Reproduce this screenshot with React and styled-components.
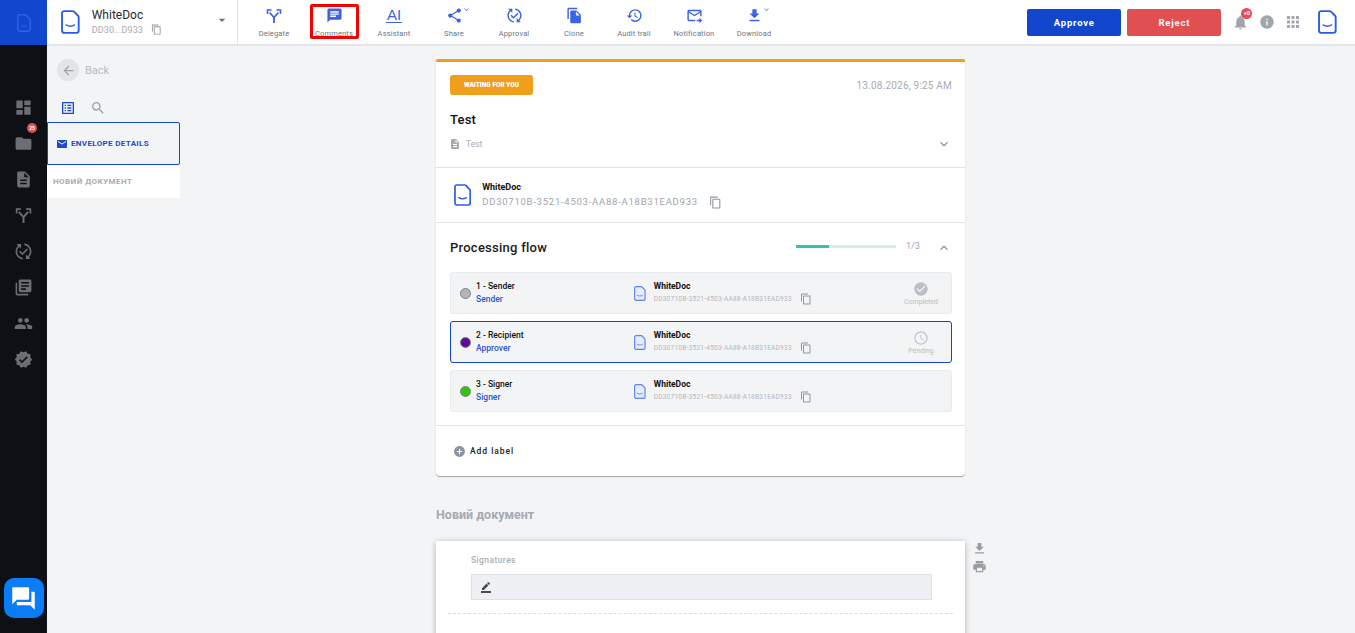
import React from "react";
import styled, { createGlobalStyle } from "styled-components";
import {
  MdDashboard, MdFolder, MdDescription, MdPublishedWithChanges, MdLibraryBooks, MdPeople, MdVerified,
  MdForum, MdChat, MdContentCopy, MdShare, MdFileCopy, MdRestore, MdForwardToInbox, MdFileDownload,
  MdEmail, MdSearch, MdListAlt, MdArrowBack, MdKeyboardArrowDown, MdKeyboardArrowUp, MdNotifications,
  MdInfo, MdApps, MdCheckCircle, MdAccessTime, MdAddCircle, MdPrint, MdArrowDropDown, MdBorderColor,
} from "react-icons/md";

const Global = createGlobalStyle`
  html, body { margin: 0; padding: 0; height: 100%; overflow: hidden; background: #f3f4f6; }
  * { box-sizing: border-box; }
  body { font-family: Roboto, "Noto Sans", sans-serif; }
`;

const Shell = styled.div`display: flex; width: 1355px; height: 633px; overflow: hidden;`;
const Rail = styled.aside`width: 47px; flex: none; background: #0d1116; display: flex; flex-direction: column; align-items: center;`;
const RailLogo = styled.div`width: 47px; height: 45px; background: #1246cc; display: flex; align-items: center; justify-content: center; margin-bottom: 44px;`;
const RailItem = styled.div`position: relative; height: 36px; width: 47px; display: flex; align-items: center; justify-content: center; color: #6b6e72; font-size: 19px;`;
const RailBadge = styled.span`position: absolute; top: -2px; left: 27px; width: 10px; height: 10px; border-radius: 50%; background: #e04f52; color: #fff; font-size: 5px; font-weight: 700; display: flex; align-items: center; justify-content: center;`;
const ChatButton = styled.div`margin-top: auto; margin-bottom: 15px; width: 40px; height: 40px; border-radius: 10px; background: #0a7cf5; color: #fff; font-size: 27px; display: flex; align-items: center; justify-content: center;`;

const Content = styled.div`flex: 1; display: flex; flex-direction: column; min-width: 0;`;
const Header = styled.header`height: 46px; flex: none; background: #fff; border-bottom: 2px solid #e3e5e8; display: flex; align-items: stretch;`;
const Brand = styled.div`width: 191px; flex: none; border-right: 1px solid #dfe1e4; display: flex; padding-left: 14px; align-items: center; position: relative;`;
const BrandText = styled.div`margin-left: 12px; display: flex; flex-direction: column; margin-top: -1px;`;
const BrandName = styled.div`font-size: 12px; line-height: 14px; color: #2a2a2a;`;
const BrandId = styled.div`font-size: 9px; line-height: 12px; margin-top: 2px; color: #a6abb2; display: flex; align-items: center; gap: 8px; letter-spacing: .1px;`;
const BrandCaret = styled.div`position: absolute; right: 7px; top: 12px; color: #6c7178; font-size: 16px; display: flex;`;

const Tools = styled.nav`display: flex; padding-left: 6px;`;
const Tool = styled.div`position: relative; width: 60px; display: flex; flex-direction: column; align-items: center; padding-top: 6px;`;
const ToolIcon = styled.div`height: 19px; color: #3b63e4; font-size: 17px; display: flex; align-items: center; position: relative; justify-content: center;`;
const ToolCaret = styled.span`position: absolute; left: 16px; top: -1px; color: #5d78d8; font-size: 9px; display: flex;`;
const ToolLabel = styled.div`font-size: 7.5px; line-height: 10px; margin-top: 4px; color: #6e7680; letter-spacing: .15px; white-space: nowrap;`;
const ToolMark = styled.div`position: absolute; left: 6px; top: 4px; width: 49px; height: 35px; border: 3px solid #f40000; border-radius: 2px;`;
const AiText = styled.span`font-size: 15px; line-height: 14px; color: #3b63e4; border-bottom: 1.5px solid #3b63e4; padding: 0 1px; font-family: "Liberation Sans", sans-serif;`;

const Actions = styled.div`margin-left: auto; display: flex; align-items: center; height: 44px;`;
const ActionButton = styled.button`width: 94px; height: 27px; margin-right: 6px; border: 0; border-radius: 2px; background: ${p => p.$bg}; color: #fff; font: 700 9.5px Roboto, sans-serif; letter-spacing: .8px; margin-top: 0;`;
const HeaderIcon = styled.div`position: relative; color: ${p => p.$c || "#a0a6ae"}; font-size: ${p => p.$s || 16}px; display: flex; margin-left: ${p => p.$ml}px;`;
const BellBadge = styled.span`position: absolute; top: -6px; left: 9px; width: 11px; height: 11px; border-radius: 50%; background: #e04f52; color: #fff; font-size: 5.5px; font-weight: 700; display: flex; align-items: center; justify-content: center;`;

const Body = styled.div`flex: 1; display: flex; min-height: 0;`;
const Side = styled.aside`width: 133px; flex: none;`;
const BackRow = styled.div`display: flex; align-items: center; padding: 13px 0 0 10px; height: 35px;`;
const BackCircle = styled.div`width: 22px; height: 22px; border-radius: 50%; background: #e2e4e7; color: #a0a5ac; font-size: 15px; display: flex; align-items: center; justify-content: center;`;
const BackText = styled.span`margin-left: 6px; font-size: 11px; color: #b6bbc1;`;
const SideTools = styled.div`display: flex; align-items: center; gap: 14px; padding: 12px 0 0 13px; height: 42px; margin-bottom: 0;`;
const ListBox = styled.div`display: flex; color: #1a4bcb; font-size: 16px;`;
const SearchBox = styled.div`display: flex; color: #9da2a9; font-size: 16px;`;
const EnvelopeTab = styled.div`height: 43px; background: #f3f4f6; border: 1px solid #1246cc; border-left-width: 1px; border-radius: 0 2px 2px 0; display: flex; align-items: center; padding: 0 0 0 8px; margin-top: -1px; color: #1a4bcb; font-size: 8px; font-weight: 700; letter-spacing: .35px; gap: 3px;`;
const DocTab = styled.div`height: 33px; background: #fff; display: flex; align-items: center; padding-left: 6px; color: #a6abb2; font-size: 8px; font-weight: 700; letter-spacing: .45px;`;

const Center = styled.main`margin-left: 256px; width: 552px; padding-top: 13px; display: flex; flex-direction: column;`;
const Card = styled.section`width: 529px; background: #fff; border-top: 3px solid #ef9f1b; border-radius: 2px 2px 4px 4px; box-shadow: 0 1px 1px #a0a0a0;`;
const Summary = styled.div`padding: 13px 13px 0 14px; height: 106px; border-bottom: 1px solid #e3e4e6;`;
const SummaryTop = styled.div`display: flex; justify-content: space-between; align-items: center;`;
const Status = styled.div`height: 20px; width: 83px; background: #ef9f1b; border-radius: 3px; color: #fff; font-size: 6.5px; font-weight: 900; display: flex; align-items: center; justify-content: center;`;
const DateText = styled.div`font-size: 10px; color: #a6abb2; letter-spacing: .2px;`;
const Title = styled.div`font-size: 13px; font-weight: 500; color: #111; margin-top: 17px; line-height: 16px; letter-spacing: .2px;`;
const DescRow = styled.div`display: flex; align-items: center; margin-top: 8px; color: #a6abb2; font-size: 8.5px; gap: 5px;`;
const DescIcon = styled.span`display: flex; font-size: 12px; margin-left: -1px;`;
const Chevron = styled.span`display: flex; color: #9298a0; font-size: 16px; margin-left: auto;`;
const DocRow = styled.div`height: 55px; border-bottom: 1px solid #e3e4e6; padding-left: 18px; display: flex; align-items: center; gap: 11px;`;
const DocName = styled.div`font-size: 9px; font-weight: 700; line-height: 11px; color: #111;`;
const DocId = styled.div`font-size: 9.5px; color: #a0a5ac; letter-spacing: .75px; margin-top: 3px; display: flex; align-items: center; gap: 11px; line-height: 12px;`;
const CopyIcon = styled.span`display: flex; color: #9298a0; font-size: ${p => p.$s || 12}px;`;

const Flow = styled.div`padding: 0 13px 13px 14px; border-bottom: 1px solid #e3e4e6;`;
const FlowHead = styled.div`height: 49px; display: flex; align-items: center;`;
const FlowTitle = styled.div`font-size: 13px; font-weight: 500; color: #1c1c1c; letter-spacing: .25px;`;
const Progress = styled.div`margin-left: auto; width: 100px; height: 3px; background: #cdf1ea; margin-top: -3px;`;
const ProgressFill = styled.div`height: 100%; background: #2fc5a5;`;
const Count = styled.div`margin-left: 10px; width: 30px; font-size: 9px; color: #a0a5ac; margin-top: -3px;`;
const Steps = styled.div`display: flex; flex-direction: column; gap: ${"7px"};`;
const Step = styled.div`height: ${p => p.$active ? 42 : 42}px; background: #f3f4f6; border: 1px solid ${p => p.$active ? "#1246cc" : "#e9eaec"}; border-radius: 3px; display: flex; align-items: center; padding-left: 9px; position: relative;`;
const Dot = styled.span`width: 11px; height: 11px; border-radius: 50%; border: 1px solid #7d8187; background: ${p => p.$c}; flex: none;`;
const StepWho = styled.div`margin-left: 5px; width: 158px; flex: none;`;
const StepName = styled.div`font-size: 8.5px; font-weight: 500; color: #111; line-height: 11px;`;
const StepRole = styled.div`font-size: 8.5px; font-weight: 500; color: #2c55d2; line-height: 11px; margin-top: 2px;`;
const StepDoc = styled.div`margin-left: 8px; display: flex; flex-direction: column; flex: none; width: 172px;`;
const StepDocName = styled.div`font-size: 8.5px; font-weight: 700; color: #111; line-height: 11px;`;
const StepDocId = styled.div`font-size: 6.5px; color: #b3b7bd; letter-spacing: .25px; display: flex; align-items: center; gap: 8px; line-height: 10px; margin-top: 1px;`;
const StepStatus = styled.div`margin-left: auto; width: 50px; margin-right: 5px; display: flex; flex-direction: column; align-items: center; color: #b8bcc2; font-size: 7px;`;
const StatusIcon = styled.span`display: flex; font-size: 16px; color: ${p => p.$c}; margin-bottom: 1px;`;
const LabelRow = styled.div`height: 50px; padding-left: 17px; display: flex; align-items: center; gap: 4px; font-size: 8.5px; font-weight: 500; letter-spacing: .95px; color: #222;`;
const LabelIcon = styled.span`display: flex; color: #8f959d; font-size: 13px;`;

const SectionName = styled.div`font-size: 12.5px; font-weight: 700; color: #a5aab1; margin-top: 31px; line-height: 16px;`;
const PageRow = styled.div`display: flex; margin-top: 18px; align-items: flex-start;`;
const Sheet = styled.div`width: 529px; height: 200px; background: #fff; box-shadow: 0 1px 6px rgba(0,0,0,.28); padding: 14px 12px 0 12px;`;
const SigLabel = styled.div`font-size: 8.5px; color: #a9aeb4; margin-left: 23px; letter-spacing: .4px; font-weight: 500; line-height: 11px;`;
const SigBox = styled.div`margin: 8px 21px 0 23px; height: 26px; background: #eff0f3; border: 1px solid #dcdfe3; display: flex; align-items: center; padding-left: 8px; color: #4a4e54; font-size: 12px;`;
const Dash = styled.div`border-top: 1px dashed #dcdde0; margin-top: 13px;`;
const PageTools = styled.div`display: flex; flex-direction: column; margin-left: 7px; color: #989da5; font-size: 15px; gap: 3px; margin-top: 0;`;
const PageTool = styled.span`display: flex;`;

const LogoDoc = ({ size = 24, light }) => (
  <svg width={size * 0.78} height={size} viewBox="0 0 18 23" fill="none">
    <path d="M1 3a2 2 0 0 1 2-2h8.2c.5 0 1 .2 1.3.5l3.9 4c.4.4.6.9.6 1.4V20a2 2 0 0 1-2 2H3a2 2 0 0 1-2-2V3z" stroke={light ? "#5f83ec" : "#2b5bea"} strokeWidth="1.8" fill={light ? "#e6ebfa" : "#fff"} />
    <path d="M5 14.3c2.4 1.5 5.6 1.5 8 0" stroke={light ? "#5f83ec" : "#2b5bea"} strokeWidth="1.4" strokeLinecap="round" />
  </svg>
);

const ForkIcon = ({ color = "currentColor", size = 18 }) => (
  <svg width={size} height={size} viewBox="0 0 18 18" fill="none" stroke={color} strokeWidth="1.8">
    <path d="M9 16v-5.5L4.6 5.5M9 10.5l4.4-5" />
    <path d="M2.5 7V3h4M15.500 7V3h-4" strokeWidth="1.6" />
  </svg>
);

const tools = [
  ["Delegate", <ForkIcon />],
  ["Comments", <MdChat />],
  ["Assistant", <AiText>AI</AiText>],
  ["Share", <MdShare />, true],
  ["Approval", <MdPublishedWithChanges />],
  ["Clone", <MdFileCopy />],
  ["Audit trail", <MdRestore />],
  ["Notification", <MdForwardToInbox />],
  ["Download", <MdFileDownload />, true],
];

const rail = [<MdDashboard />, <MdFolder />, <MdDescription />, <ForkIcon size={19} />, <MdPublishedWithChanges />, <MdLibraryBooks />, <MdPeople />, <MdVerified />];

const steps = [
  { name: "1 - Sender", role: "Sender", dot: "#b3b5b9", status: "Completed", icon: <MdCheckCircle />, ic: "#bcc0c6" },
  { name: "2 - Recipient", role: "Approver", dot: "#5a0a96", status: "Pending", icon: <MdAccessTime />, ic: "#c4c8cd", active: true },
  { name: "3 - Signer", role: "Signer", dot: "#35c40e" },
];

export default function App() {
  return (
    <Shell>
      <Global />
      <Rail>
        <RailLogo><svg width="14" height="18" viewBox="0 0 18 23" fill="none"><path d="M1 3a2 2 0 0 1 2-2h8l6 6v13a2 2 0 0 1-2 2H3a2 2 0 0 1-2-2z" stroke="#2a62e6" strokeWidth="2" /><path d="M5 14.300c2.400 1.500 5.600 1.500 8 0" stroke="#2a62e6" strokeWidth="1.500" /></svg></RailLogo>
        {rail.map((icon, i) => (
          <RailItem key={i}>{icon}{i === 1 && <RailBadge>25</RailBadge>}</RailItem>
        ))}
        <ChatButton><MdForum /></ChatButton>
      </Rail>
      <Content>
        <Header>
          <Brand>
            <LogoDoc size={24} />
            <BrandText>
              <BrandName>WhiteDoc</BrandName>
              <BrandId>DD30...D933 <CopyIcon $s={11}><MdContentCopy /></CopyIcon></BrandId>
            </BrandText>
            <BrandCaret><MdArrowDropDown /></BrandCaret>
          </Brand>
          <Tools>
            {tools.map(([label, icon, caret]) => (
              <Tool key={label}>
                <ToolIcon>{icon}{caret && <ToolCaret><MdKeyboardArrowDown /></ToolCaret>}</ToolIcon>
                <ToolLabel>{label}</ToolLabel>
                {label === "Comments" && <ToolMark />}
              </Tool>
            ))}
          </Tools>
          <Actions>
            <ActionButton $bg="#1246cc">Approve</ActionButton>
            <ActionButton $bg="#e04f52">Reject</ActionButton>
            <HeaderIcon $ml={5} $s={17}><MdNotifications /><BellBadge>+0</BellBadge></HeaderIcon>
            <HeaderIcon $ml={10} $s={16}><MdInfo /></HeaderIcon>
            <HeaderIcon $ml={9} $s={18}><MdApps /></HeaderIcon>
            <HeaderIcon $ml={16} $s={18} style={{ marginRight: 18 }}><LogoDoc size={24} /></HeaderIcon>
          </Actions>
        </Header>
        <Body>
          <Side>
            <BackRow><BackCircle><MdArrowBack /></BackCircle><BackText>Back</BackText></BackRow>
            <SideTools>
              <ListBox><MdListAlt /></ListBox>
              <SearchBox><MdSearch /></SearchBox>
            </SideTools>
            <EnvelopeTab><MdEmail size={12} />ENVELOPE DETAILS</EnvelopeTab>
            <DocTab>НОВИЙ ДОКУМЕНТ</DocTab>
          </Side>
          <Center>
            <Card>
              <Summary>
                <SummaryTop>
                  <Status>WAITING FOR YOU</Status>
                  <DateText>13.08.2026, 9:25 AM</DateText>
                </SummaryTop>
                <Title>Test</Title>
                <DescRow>
                  <DescIcon><MdDescription /></DescIcon>Test
                  <Chevron><MdKeyboardArrowDown /></Chevron>
                </DescRow>
              </Summary>
              <DocRow>
                <LogoDoc size={22} />
                <div>
                  <DocName>WhiteDoc</DocName>
                  <DocId>DD30710B-3521-4503-AA88-A18B31EAD933 <CopyIcon $s={13}><MdContentCopy /></CopyIcon></DocId>
                </div>
              </DocRow>
              <Flow>
                <FlowHead>
                  <FlowTitle>Processing flow</FlowTitle>
                  <Progress><ProgressFill style={{ width: "33%" }} /></Progress>
                  <Count>1/3</Count>
                  <Chevron style={{ marginLeft: 0 }}><MdKeyboardArrowUp /></Chevron>
                </FlowHead>
                <Steps>
                  {steps.map(s => (
                    <Step key={s.name} $active={s.active}>
                      <Dot $c={s.dot} />
                      <StepWho>
                        <StepName>{s.name}</StepName>
                        <StepRole>{s.role}</StepRole>
                      </StepWho>
                      <LogoDoc size={15} light />
                      <StepDoc>
                        <StepDocName>WhiteDoc</StepDocName>
                        <StepDocId>DD30710B-3521-4503-AA88-A18B31EAD933 <CopyIcon $s={12}><MdContentCopy /></CopyIcon></StepDocId>
                      </StepDoc>
                      {s.status && (
                        <StepStatus>
                          <StatusIcon $c={s.ic}>{s.icon}</StatusIcon>
                          {s.status}
                        </StepStatus>
                      )}
                    </Step>
                  ))}
                </Steps>
              </Flow>
              <LabelRow><LabelIcon><MdAddCircle /></LabelIcon>Add label</LabelRow>
            </Card>
            <SectionName>Новий документ</SectionName>
            <PageRow>
              <Sheet>
                <SigLabel>Signatures</SigLabel>
                <SigBox><MdBorderColor /></SigBox>
                <Dash />
              </Sheet>
              <PageTools>
                <PageTool><MdFileDownload /></PageTool>
                <PageTool><MdPrint /></PageTool>
              </PageTools>
            </PageRow>
          </Center>
        </Body>
      </Content>
    </Shell>
  );
}
